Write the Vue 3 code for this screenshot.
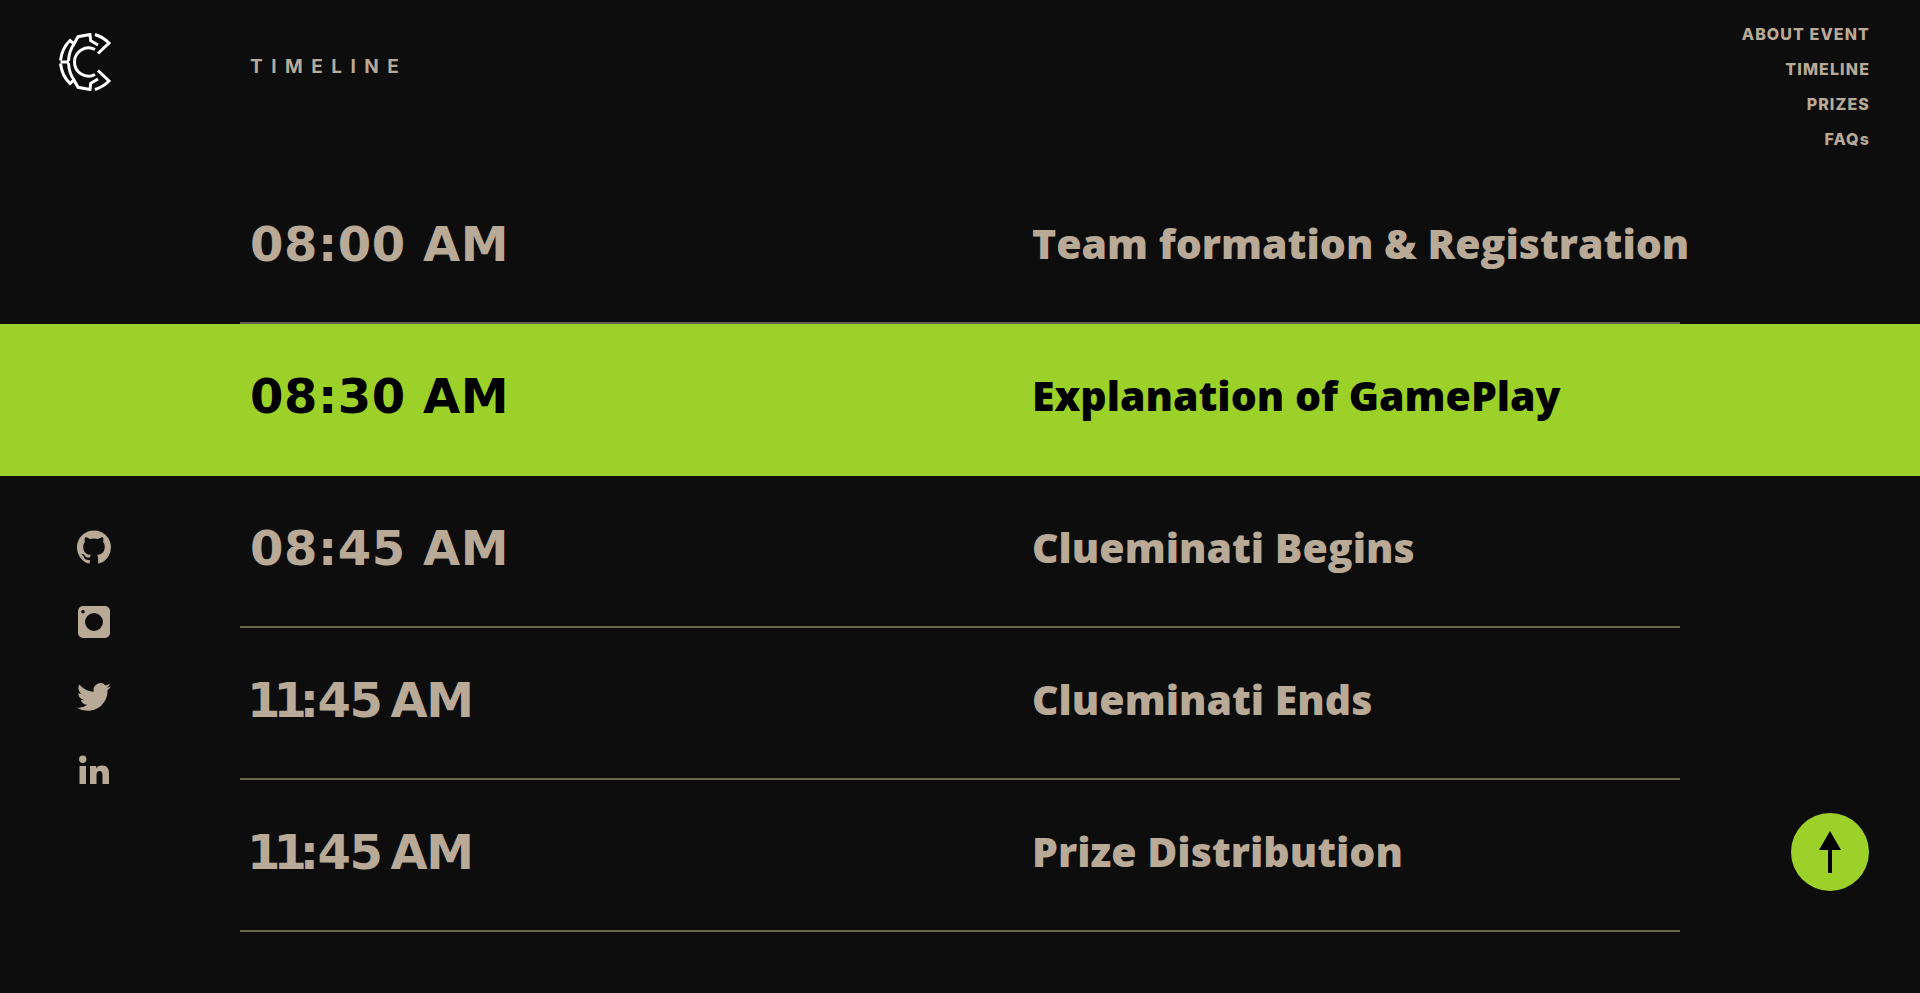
<template>
  <div class="page">
    <header class="top">
      <div class="logo">
        <svg width="52" height="58" viewBox="0 0 52 58" fill="none" stroke="#fff" stroke-width="3">
          <path d="M1.500 29H10" />
          <g v-for="t in logoFlips" :key="t" :transform="t">
            <path d="M36 16.500A14 14 0 0 0 15.500 29" />
            <path d="M36 1.500Q44 4 50 10L39 20.500" />
            <path d="M1.500 27.500Q3 15 11 7.500L15 11L19 3.700L31 1.500L31.700 7.700L39 12" />
            <path d="M9.500 28Q10 18 15 11" />
          </g>
        </svg>
      </div>
      <div class="section-title">TIMELINE</div>
      <nav class="nav">
        <a v-for="link in links" :key="link">{{ link }}</a>
      </nav>
    </header>

    <main class="timeline">
      <div
        v-for="row in rows"
        :key="row.time + row.title"
        :class="['row', { 'row--active': row.active }]"
      >
        <div class="row-inner">
          <div :class="['row-time', { 'row-time--narrow': row.lead }]">
            <span v-if="row.lead" class="row-time-lead">{{ row.lead }}</span>{{ row.time }}
          </div>
          <div class="row-title">{{ row.title }}</div>
        </div>
      </div>
    </main>

    <aside class="socials">
      <svg class="social" width="34" height="34" viewBox="0 0 24 24">
        <path d="M12 .3a12 12 0 0 0-3.800 23.400c.600.100.800-.300.800-.600v-2c-3.300.700-4-1.600-4-1.600-.500-1.400-1.300-1.800-1.300-1.800-1.100-.700.100-.700.100-.700 1.200.100 1.800 1.200 1.800 1.200 1.100 1.800 2.800 1.300 3.500 1 .100-.800.400-1.300.800-1.600-2.700-.300-5.500-1.300-5.500-6 0-1.300.500-2.400 1.200-3.200-.100-.300-.500-1.500.100-3.200 0 0 1-.300 3.300 1.200a11.500 11.500 0 0 1 6 0c2.300-1.500 3.300-1.200 3.300-1.200.700 1.700.200 2.900.100 3.200.800.800 1.200 1.900 1.200 3.200 0 4.600-2.800 5.700-5.500 6 .400.400.800 1.100.800 2.200v3.300c0 .300.200.700.800.600A12 12 0 0 0 12 .3" />
      </svg>
      <svg class="social" width="34" height="34" viewBox="0 0 34 34">
        <path fill-rule="evenodd" d="M6 1h22a5 5 0 0 1 5 5v22a5 5 0 0 1-5 5H6a5 5 0 0 1-5-5V6a5 5 0 0 1 5-5ZM17 8a9 9 0 1 0 0 18 9 9 0 0 0 0-18ZM6 5a1.800 1.800 0 1 0 0 3.600A1.800 1.800 0 0 0 6 5Z" />
      </svg>
      <svg class="social" width="34" height="34" viewBox="0 0 24 24">
        <path d="M23.950 4.570a10 10 0 0 1-2.820.770 4.960 4.960 0 0 0 2.160-2.720c-.950.550-2 .950-3.130 1.180a4.920 4.920 0 0 0-8.380 4.480C7.690 8.100 4.070 6.130 1.640 3.160a4.820 4.820 0 0 0-.660 2.470c0 1.710.870 3.210 2.190 4.100a4.900 4.900 0 0 1-2.230-.620v.060a4.920 4.920 0 0 0 3.950 4.830 5 5 0 0 1-2.210.080 4.940 4.940 0 0 0 4.610 3.420A9.870 9.870 0 0 1 0 19.540a14 14 0 0 0 7.560 2.210c9.050 0 14-7.500 14-13.980 0-.210 0-.420-.020-.630a9.940 9.940 0 0 0 2.460-2.550z" />
      </svg>
      <svg class="social" width="34" height="34" viewBox="0 3 34 34">
        <path d="M2.500 14h6.500v18H2.500zM5.750 3.500a3.700 3.700 0 1 1 0 7.400 3.700 3.700 0 0 1 0-7.400ZM13 14h6.200v2.600c1-1.800 3-3.100 5.700-3.100 5.300 0 7.100 3.400 7.100 8.100V32h-6.500v-9.100c0-2.400-.800-3.900-2.800-3.900-2.200 0-3.200 1.600-3.200 3.900V32H13z" />
      </svg>
    </aside>

    <button class="to-top" type="button" aria-label="Back to top">
      <svg width="24" height="44" viewBox="0 0 24 44">
        <path d="M12 1 23 20H14V43H10V20H1Z" fill="#000" />
      </svg>
    </button>
  </div>
</template>

<script setup>
const logoFlips = ['', 'matrix(1 0 0 -1 0 58)']

const links = ['ABOUT EVENT', 'TIMELINE', 'PRIZES', 'FAQs']

const rows = [
  { time: '08:00 AM', title: 'Team formation & Registration' },
  { time: '08:30 AM', title: 'Explanation of GamePlay', active: true },
  { time: '08:45 AM', title: 'Clueminati Begins' },
  { lead: '11', time: ':45 AM', title: 'Clueminati Ends' },
  { lead: '11', time: ':45 AM', title: 'Prize Distribution' },
]
</script>

<style>
html,
body {
  background: #0d0d0d;
}
</style>

<style scoped>
.page {
  position: relative;
  height: 993px;
  overflow: hidden;
  background: #0d0d0d;
  color: #b8aa97;
}

.top {
  display: flex;
  align-items: flex-start;
  height: 172px;
  padding-left: 59px;
  padding-right: 50px;
  box-sizing: border-box;
}

.logo {
  width: 191px;
  padding-top: 33px;
  line-height: 0;
}

.section-title {
  margin-top: 55px;
  font-family: Inter, sans-serif;
  font-size: 19px;
  line-height: 24px;
  font-weight: 700;
  letter-spacing: 8.500px;
}

.nav {
  display: flex;
  flex-direction: column;
  align-items: flex-end;
  gap: 15px;
  margin-left: auto;
  padding-top: 24px;
  font-family: Inter, sans-serif;
  font-size: 16px;
  line-height: 20px;
  font-weight: 800;
  letter-spacing: 1.100px;
}

.row {
  height: 152px;
  padding: 0 240px;
  box-sizing: border-box;
}

.row--active {
  background: #9bd128;
  color: #000;
}

.row-inner {
  display: grid;
  grid-template-columns: 782px 1fr;
  align-items: center;
  height: 100%;
  padding: 0 0 7px 10px;
  box-sizing: border-box;
  border-bottom: 2px solid #67654f;
  white-space: nowrap;
}

.row:first-child .row-inner {
  border-bottom-color: #62625a;
}

.row--active .row-inner {
  border-bottom-color: transparent;
}

.row-time {
  font-family: "DejaVu Sans", sans-serif;
  font-size: 48px;
  line-height: 60px;
  font-weight: 700;
  letter-spacing: 0.600px;
}

.row-time--narrow {
  letter-spacing: -1.500px;
  word-spacing: -6px;
}

.row-time-lead {
  margin-left: -3px;
  letter-spacing: -7px;
}

.row-title {
  margin-bottom: 2px;
  font-family: "Open Sans", sans-serif;
  font-size: 41px;
  line-height: 52px;
  font-weight: 800;
}

.socials {
  position: absolute;
  left: 77px;
  top: 530px;
  display: flex;
  flex-direction: column;
  gap: 41px;
}

.social {
  display: block;
  fill: #b8aa97;
}

.to-top {
  position: absolute;
  left: 1791px;
  top: 813px;
  display: flex;
  align-items: center;
  justify-content: center;
  width: 78px;
  height: 78px;
  padding: 0;
  border: 0;
  border-radius: 50%;
  background: #9bd128;
}
</style>
